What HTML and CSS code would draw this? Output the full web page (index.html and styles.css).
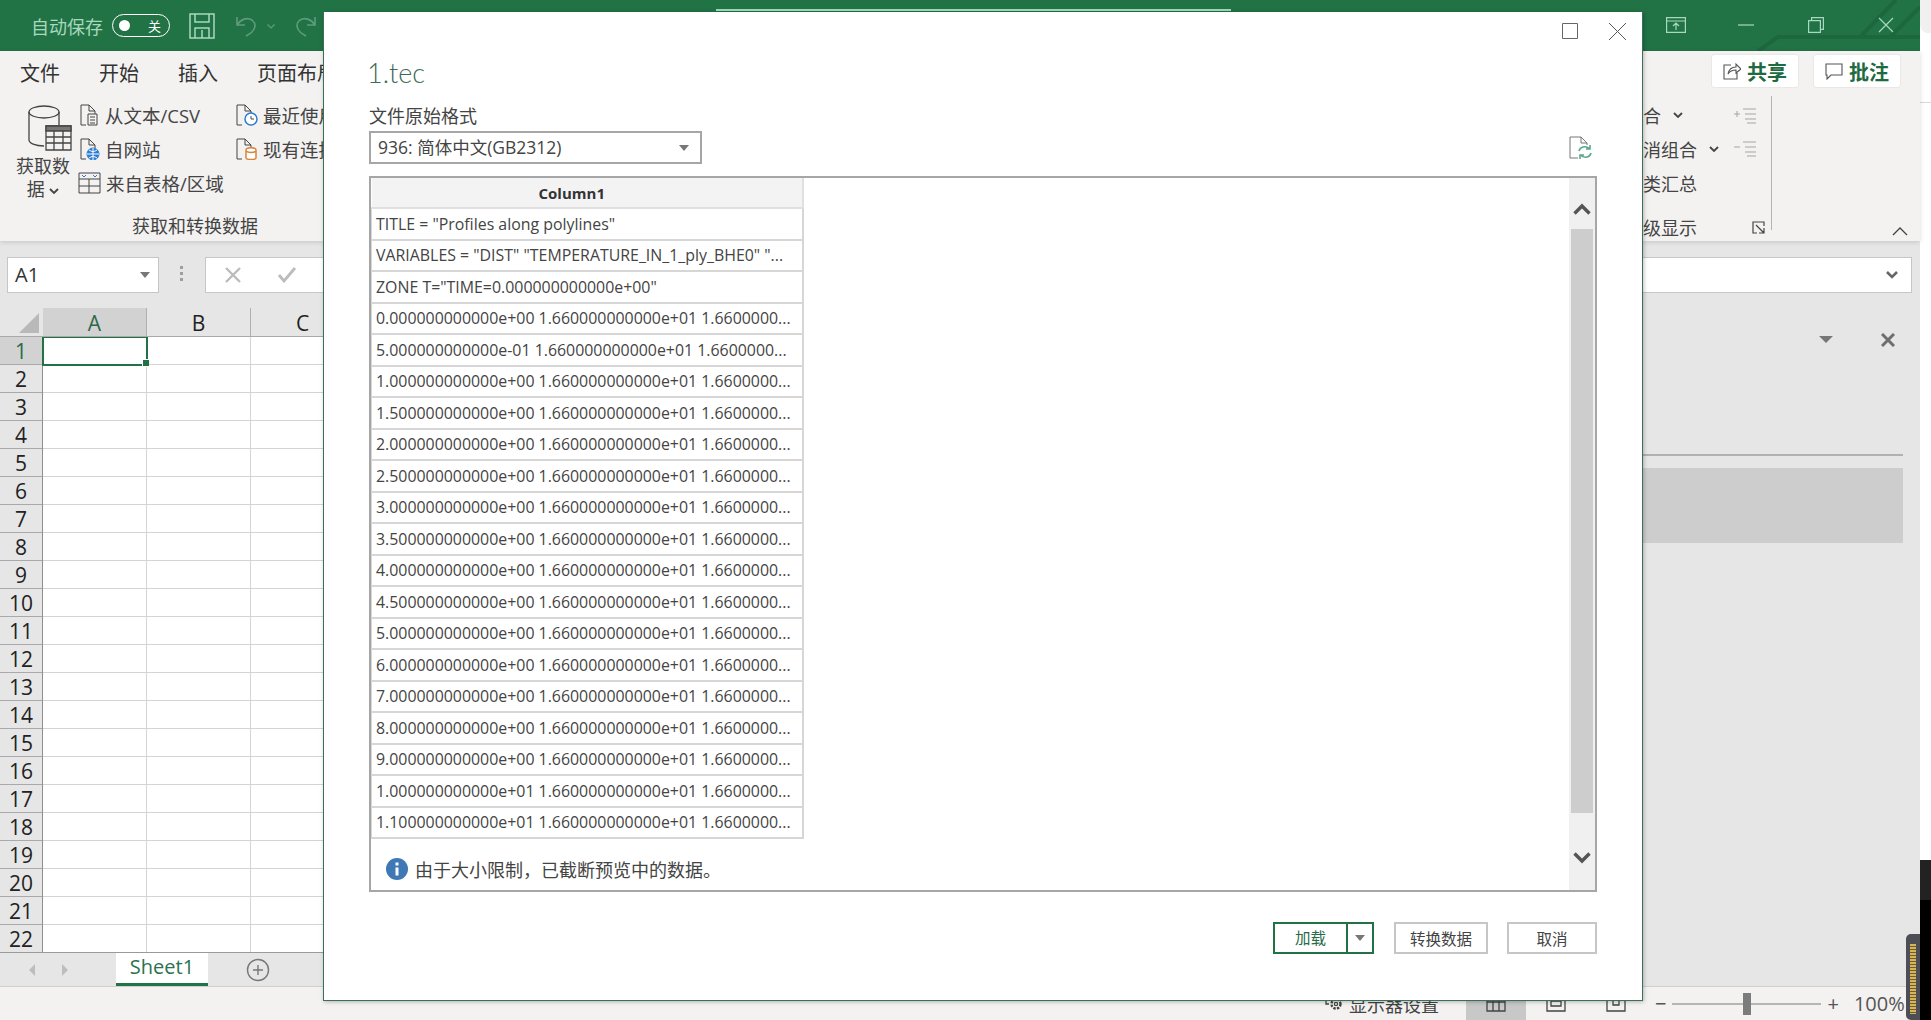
FILE: index.html
```html
<!DOCTYPE html>
<html lang="zh-CN">
<head>
    <meta charset="UTF-8">
    <title>1.tec - Excel</title>
    <link rel="stylesheet" href="styles.css">
</head>
<body>
    <div class="app">
        <div class="excel">
            <!-- title bar -->
            <div class="titlebar">
                <span class="autosave">自动保存</span>
                <span class="toggle"><i></i><b>关</b></span>
                <svg class="qa-save" width="26" height="26" viewBox="0 0 26 26" fill="none" stroke="#a8d8bd" stroke-width="1.5"><path d="M1 1h24v24H1zM6 1v8h14V1M6 25V15h14v10M13 17v8"/></svg>
                <svg class="qa-undo" width="24" height="24" viewBox="0 0 24 24" fill="none" stroke="#5f9c7c" stroke-width="1.6"><path d="M2 3v8h8M2 11c4-6 10-8 15-5 5 4 4 11-6 16"/></svg>
                <svg class="qa-caret" width="8" height="5" viewBox="0 0 8 5" fill="none" stroke="#5f9c7c" stroke-width="1.2"><path d="M.5.5L4 4 7.5.5"/></svg>
                <svg class="qa-redo" width="24" height="24" viewBox="0 0 24 24" fill="none" stroke="#5f9c7c" stroke-width="1.6"><path d="M22 3v8h-8M22 11c-4-6-10-8-15-5-5 4-4 11 6 16"/></svg>
                <div class="title-progress"></div>
                <svg class="title-deco" width="300" height="51" viewBox="0 0 300 51" fill="none" stroke="#1d673e" stroke-width="4"><path d="M138 51l20-14h142M240 37l36-37M270 37l30-30"/></svg>
                <div class="win-btns">
                    <svg class="win-ribbon" width="20" height="16" viewBox="0 0 20 16" fill="none" stroke="#a8d8bd" stroke-width="1.2"><path d="M.6.6h18.8v14.8H.6zM.6 4h18.8M10 13V6M7 9l3-3 3 3"/></svg>
                    <svg width="16" height="16" viewBox="0 0 16 16" stroke="#a8d8bd" stroke-width="1.2"><path d="M0 8h16"/></svg>
                    <svg width="16" height="16" viewBox="0 0 16 16" fill="none" stroke="#a8d8bd" stroke-width="1.2"><path d="M.6 3.6h11.8v11.8H.6zM3.6 3.6V.6h11.8v11.8h-3"/></svg>
                    <svg width="16" height="16" viewBox="0 0 16 16" stroke="#a8d8bd" stroke-width="1.2"><path d="M1 1l14 14M15 1L1 15"/></svg>
                </div>
            </div>

            <!-- ribbon -->
            <div class="ribbon">
                <div class="tabs">
                    <span>文件</span><span>开始</span><span>插入</span><span>页面布局</span>
                    <div class="tab-actions">
                        <button class="pill">
                            <svg width="18" height="18" viewBox="0 0 18 18" fill="none" stroke="#555" stroke-width="1.1"><path d="M8 3H1v14h13v-6M5 12c1-5 4-7 8-7V2l5 5-5 4V8c-4 0-6 1-8 4z"/></svg>共享
                        </button>
                        <button class="pill">
                            <svg width="18" height="18" viewBox="0 0 18 18" fill="none" stroke="#555" stroke-width="1.1"><path d="M1 2h16v11H6l-4 4v-4H1z"/></svg>批注
                        </button>
                    </div>
                </div>
                <div class="groups">
                    <div class="get-data">
                        <div class="get-data-top">
                            <div class="get-big">
                                <svg width="44" height="46" viewBox="0 0 44 46" fill="none" stroke="#444" stroke-width="1.3"><ellipse cx="16" cy="7" rx="15" ry="6"/><path d="M1 7v28c0 3 6 6 15 6M31 7v13"/><path d="M18 21h25v24H18z" fill="#f3f2f1"/><path d="M18 21h25v5H18z" fill="#777"/><path d="M18 32h25M18 38h25M26 26v19M35 26v19"/></svg>
                                <span>获取数<br>据 <svg class="chev" width="10" height="6" viewBox="0 0 10 6" fill="none" stroke="#444" stroke-width="1.8"><path d="M1 1l4 4 4-4"/></svg></span>
                            </div>
                            <div class="get-list">
                                <div class="cmd"><svg width="20" height="22" viewBox="0 0 20 22" fill="none" stroke="#444"><path d="M6 21H1V1h8l6 6v3M9 1v6h6"/><path d="M8 10h9v11H8zM10 13h5M10 16h5M10 19h5"/></svg>从文本/CSV</div>
                                <div class="cmd"><svg width="20" height="22" viewBox="0 0 20 22" fill="none" stroke="#444"><path d="M6 21H1V1h8l6 6v3M9 1v6h6"/><circle cx="13" cy="16" r="6" fill="#2b7cd3" stroke="#2b7cd3"/><path d="M7 16h12M13 10v12M9 12c3 2 5 2 8 0M9 20c3-2 5-2 8 0" stroke="#fff"/></svg>自网站</div>
                                <div class="cmd wide"><svg width="23" height="22" viewBox="0 0 23 22" fill="none" stroke="#444"><path d="M1 1h21v20H1zM1 7h21M1 14h21M11 7v14"/><path d="M4 3l2 2 2-2M15 3l2 2 2-2" stroke="#2b7cd3"/></svg>来自表格/区域</div>
                            </div>
                            <div class="get-list recent">
                                <div class="cmd"><svg width="22" height="22" viewBox="0 0 22 22" fill="none" stroke="#444"><path d="M6 21H1V1h8l6 6v3M9 1v6h6"/><circle cx="15" cy="15" r="6" fill="#fff" stroke="#2b7cd3" stroke-width="1.5"/><path d="M15 12v3h3"/></svg>最近使用的源</div>
                                <div class="cmd"><svg width="22" height="22" viewBox="0 0 22 22" fill="none" stroke="#444"><path d="M6 21H1V1h8l6 6v3M9 1v6h6"/><path d="M10 12c0-3 10-3 10 0v8c0 2-10 2-10 0zM10 13c2 2 8 2 10 0" fill="#fff" stroke="#d9853b" stroke-width="1.5"/></svg>现有连接</div>
                            </div>
                        </div>
                        <div class="group-label">获取和转换数据</div>
                    </div>
                    <div class="outline">
                        <div class="outline-top">
                            <div class="outline-list">
                                <div class="o-row">组合<svg width="10" height="6" viewBox="0 0 10 6" fill="none" stroke="#444" stroke-width="1.8"><path d="M1 1l4 4 4-4"/></svg></div>
                                <div class="o-row">取消组合<svg width="10" height="6" viewBox="0 0 10 6" fill="none" stroke="#444" stroke-width="1.8"><path d="M1 1l4 4 4-4"/></svg></div>
                                <div class="o-row">分类汇总</div>
                            </div>
                            <div class="outline-icons">
                                <svg width="22" height="16" viewBox="0 0 22 16" fill="none" stroke="#a5a5a5"><path d="M0 6h6M3 3v6M9 1h13M11 6h11M11 11h11M13 15h9"/></svg>
                                <svg width="22" height="16" viewBox="0 0 22 16" fill="none" stroke="#a5a5a5"><path d="M0 6h6M9 1h13M11 6h11M11 11h11M13 15h9"/></svg>
                            </div>
                        </div>
                        <div class="outline-foot">
                            <span>分级显示</span>
                            <svg width="13" height="13" viewBox="0 0 13 13" fill="none" stroke="#444" stroke-width="1.2"><path d="M12 5V1H1v11h4M4 4l8 8M12 7v5H7"/></svg>
                        </div>
                    </div>
                    <div class="ribbon-end">
                        <svg width="16" height="9" viewBox="0 0 16 9" fill="none" stroke="#444" stroke-width="1.3"><path d="M1 8l7-7 7 7"/></svg>
                    </div>
                </div>
            </div>

            <!-- formula bar -->
            <div class="formula">
                <div class="namebox">A1<i class="caret"></i></div>
                <div class="grip"></div>
                <div class="fx-input">
                    <svg width="18" height="16" viewBox="0 0 18 16" stroke="#bcbcbc" stroke-width="2.4"><path d="M2 1l14 14M16 1L2 15"/></svg>
                    <svg width="20" height="16" viewBox="0 0 20 16" fill="none" stroke="#bcbcbc" stroke-width="2.8"><path d="M2 8l5 6L18 1"/></svg>
                    <svg class="fx-chevron" width="12" height="8" viewBox="0 0 12 8" fill="none" stroke="#666" stroke-width="2.6"><path d="M1 1l5 5 5-5"/></svg>
                </div>
            </div>

            <!-- sheet + side pane -->
            <div class="main">
                <div class="sheet">
                    <div class="col-heads">
                        <div class="corner"><i></i></div>
                        <div class="col-head active">A</div>
                        <div class="col-head">B</div>
                        <div class="col-head">C</div>
                    </div>
                    <div class="grid-body">
                        <div class="row-heads">
                            <div class="active">1</div><div>2</div><div>3</div><div>4</div><div>5</div><div>6</div>
                            <div>7</div><div>8</div><div>9</div><div>10</div><div>11</div><div>12</div>
                            <div>13</div><div>14</div><div>15</div><div>16</div><div>17</div><div>18</div>
                            <div>19</div><div>20</div><div>21</div><div>22</div>
                        </div>
                        <div class="cells">
                            <div class="cell-selected"><i></i></div>
                        </div>
                    </div>
                    <div class="sheet-tabs">
                        <span class="nav-arrow left"></span>
                        <span class="nav-arrow right"></span>
                        <div class="sheet-tab">Sheet1</div>
                        <svg class="add-sheet" width="24" height="24" viewBox="0 0 24 24" fill="none" stroke="#777" stroke-width="1.4"><circle cx="12" cy="12" r="10.5"/><path d="M12 7v10M7 12h10"/></svg>
                    </div>
                </div>
                <div class="pane">
                    <div class="pane-head">
                        <i class="pane-caret"></i>
                        <svg width="14" height="14" viewBox="0 0 14 14" stroke="#6e6e6e" stroke-width="3"><path d="M1 1l12 12M13 1L1 13"/></svg>
                    </div>
                    <div class="pane-line"></div>
                    <div class="pane-item"></div>
                </div>
            </div>

            <!-- status bar -->
            <div class="statusbar">
                <span class="status-display">
                    <svg width="18" height="20" viewBox="0 0 18 20" fill="none" stroke="#444" stroke-width="1.3"><path d="M1 0v12h3"/><circle cx="11" cy="12" r="4.5" stroke-width="2.4" stroke-dasharray="2.4 1.2"/><circle cx="11" cy="12" r="1.6"/></svg>显示器设置
                </span>
                <div class="view-btn on"><svg width="20" height="16" viewBox="0 0 20 16" fill="none" stroke="#444" stroke-width="1.3"><path d="M1 1h18v14H1zM1 6h18M7 1v14M13 1v14"/></svg></div>
                <div class="view-btn"><svg width="20" height="16" viewBox="0 0 20 16" fill="none" stroke="#444" stroke-width="1.3"><path d="M1 1h18v14H1zM5 1v9h10V1M5 5h10"/></svg></div>
                <div class="view-btn"><svg width="20" height="16" viewBox="0 0 20 16" fill="none" stroke="#444" stroke-width="1.3"><path d="M1 1h18v14H1zM7 1v8h6V1"/></svg></div>
                <span class="zoom-sign minus">−</span>
                <div class="zoom-track"><i></i></div>
                <span class="zoom-sign">+</span>
                <span class="zoom-val">100%</span>
            </div>
        </div>
        <div class="edge">
            <div class="edge-corner"></div>
            <div class="edge-line"></div>
            <div class="edge-black"></div>
        </div>
    </div>

    <!-- meter widget that floats over the window corner -->
    <div class="meter"><i></i></div>

    <!-- import dialog -->
    <div class="dialog">
        <div class="dlg-controls">
            <svg width="16" height="16" viewBox="0 0 16 16" fill="none" stroke="#666"><path d="M.5.5h15v15H.5z"/></svg>
            <svg class="dlg-close" width="19" height="19" viewBox="0 0 19 19" stroke="#555"><path d="M1 1l17 17M18 1L1 18"/></svg>
        </div>
        <div class="dlg-title">1.tec</div>
        <div class="dlg-label">文件原始格式</div>
        <div class="dlg-encoding">
            <div class="dlg-select">936: 简体中文(GB2312)<i class="caret"></i></div>
            <svg width="24" height="24" viewBox="0 0 24 24" fill="none"><path d="M9 22H1V1h11l6 6v2M12 1v6h6" stroke="#777"/><path d="M10 15c1-4 6-6 11-2M22 17c-1 4-6 6-11 2M21 9v4h-4M11 23v-4h4" stroke="#5aa88a" stroke-width="1.6"/></svg>
        </div>
        <div class="preview">
            <div class="preview-main">
                <table class="data">
                    <tr><th>Column1</th></tr>
                    <tr><td>TITLE = "Profiles along polylines"</td></tr>
                    <tr><td>VARIABLES = "DIST" "TEMPERATURE_IN_1_ply_BHE0" "...</td></tr>
                    <tr><td>ZONE T="TIME=0.000000000000e+00"</td></tr>
                    <tr><td>0.000000000000e+00 1.660000000000e+01 1.6600000...</td></tr>
                    <tr><td>5.000000000000e-01 1.660000000000e+01 1.6600000...</td></tr>
                    <tr><td>1.000000000000e+00 1.660000000000e+01 1.6600000...</td></tr>
                    <tr><td>1.500000000000e+00 1.660000000000e+01 1.6600000...</td></tr>
                    <tr><td>2.000000000000e+00 1.660000000000e+01 1.6600000...</td></tr>
                    <tr><td>2.500000000000e+00 1.660000000000e+01 1.6600000...</td></tr>
                    <tr><td>3.000000000000e+00 1.660000000000e+01 1.6600000...</td></tr>
                    <tr><td>3.500000000000e+00 1.660000000000e+01 1.6600000...</td></tr>
                    <tr><td>4.000000000000e+00 1.660000000000e+01 1.6600000...</td></tr>
                    <tr><td>4.500000000000e+00 1.660000000000e+01 1.6600000...</td></tr>
                    <tr><td>5.000000000000e+00 1.660000000000e+01 1.6600000...</td></tr>
                    <tr><td>6.000000000000e+00 1.660000000000e+01 1.6600000...</td></tr>
                    <tr><td>7.000000000000e+00 1.660000000000e+01 1.6600000...</td></tr>
                    <tr><td>8.000000000000e+00 1.660000000000e+01 1.6600000...</td></tr>
                    <tr><td>9.000000000000e+00 1.660000000000e+01 1.6600000...</td></tr>
                    <tr><td>1.000000000000e+01 1.660000000000e+01 1.6600000...</td></tr>
                    <tr><td>1.100000000000e+01 1.660000000000e+01 1.6600000...</td></tr>
                </table>
                <div class="note">
                    <svg width="22" height="22" viewBox="0 0 22 22"><circle cx="11" cy="11" r="11" fill="#3f79b5"/><path d="M9.5 9.5h3v8h-3zM9.5 4.5h3v3h-3z" fill="#fff"/></svg>
                    由于大小限制，已截断预览中的数据。
                </div>
            </div>
            <div class="scrollbar">
                <svg width="18" height="12" viewBox="0 0 18 12" fill="none" stroke="#555" stroke-width="3.4"><path d="M1.5 10.5L9 3l7.5 7.5"/></svg>
                <div class="thumb"></div>
                <svg width="18" height="12" viewBox="0 0 18 12" fill="none" stroke="#555" stroke-width="3.4"><path d="M1.5 1.5L9 9l7.5-7.5"/></svg>
            </div>
        </div>
        <div class="dlg-buttons">
            <div class="split">
                <span>加载</span>
                <span class="split-arrow"><i class="caret"></i></span>
            </div>
            <button class="dlg-btn transform">转换数据</button>
            <button class="dlg-btn cancel">取消</button>
        </div>
    </div>
</body>
</html>
```

FILE: styles.css
```css
body, html {
    margin: 0;
    padding: 0;
    height: 100%;
    overflow: hidden;
    font-family: "Open Sans", "Noto Sans CJK SC", sans-serif;
    color: #444;
    background: #fff;
}

svg {
    display: block;
    flex: none;
}

.app {
    display: flex;
    height: 1020px;
}

.excel {
    width: 1920px;
    display: flex;
    flex-direction: column;
    background: #e6e6e6;
}

/* title bar */
.titlebar {
    height: 51px;
    flex: none;
    background: #217346;
    display: flex;
    align-items: center;
    padding-left: 31px;
    position: relative;
    overflow: hidden;
}

.autosave {
    font-size: 18px;
    color: #a8d8bd;
    margin-right: 9px;
}

.toggle {
    width: 58px;
    height: 23px;
    border: 1.5px solid #fff;
    border-radius: 12px;
    display: flex;
    align-items: center;
    justify-content: space-between;
    padding: 0 8px 0 6px;
    box-sizing: border-box;
    margin-right: 19px;
}

.toggle i {
    width: 11px;
    height: 11px;
    background: #fff;
    border-radius: 50%;
}

.toggle b {
    font-weight: 400;
    font-size: 13px;
    color: #fff;
}

.qa-undo {
    margin-left: 20px;
}

.qa-caret {
    margin: 2px 18px 0 8px;
}

.title-progress {
    position: absolute;
    left: 716px;
    top: 9px;
    width: 515px;
    height: 2px;
    background: #9fd8b8;
}

.title-deco {
    position: absolute;
    right: 0;
    top: 0;
}

.win-btns {
    position: absolute;
    right: 26px;
    top: 17px;
    display: flex;
    align-items: center;
    gap: 54px;
}

.win-ribbon {
    margin-right: -2px;
}

/* ribbon */
.ribbon {
    height: 190px;
    flex: none;
    background: #f3f2f1;
    display: flex;
    flex-direction: column;
    box-shadow: 0 1px 5px rgba(0, 0, 0, 0.15);
    position: relative;
}

.tabs {
    height: 44px;
    display: flex;
    align-items: center;
    padding: 2px 0 0 20px;
    box-sizing: border-box;
    gap: 39px;
    font-size: 20px;
    color: #333;
}

.tab-actions {
    margin: -2px 19px 0 auto;
    display: flex;
    gap: 14px;
}

.pill {
    width: 88px;
    height: 34px;
    background: #fff;
    border: 1px solid #e9e8e7;
    border-radius: 3px;
    display: flex;
    align-items: center;
    justify-content: center;
    gap: 6px;
    font-family: inherit;
    font-size: 20px;
    font-weight: 700;
    color: #1e6b41;
    padding: 0;
}

.groups {
    flex: 1;
    display: flex;
    justify-content: space-between;
}

.get-data {
    width: 320px;
    display: flex;
    flex-direction: column;
}

.get-data-top {
    height: 121px;
    display: flex;
    padding: 12px 0 0 16px;
    box-sizing: border-box;
}

.get-big {
    width: 62px;
    flex: none;
    display: flex;
    flex-direction: column;
    align-items: center;
    font-size: 18px;
    line-height: 23px;
    text-align: center;
    padding: 2px 8px 0 0;
    box-sizing: border-box;
}

.get-big > svg {
    margin-left: 14px;
    margin-bottom: 4px;
}

.get-big span {
    white-space: nowrap;
}

.chev {
    display: inline-block;
    vertical-align: 2px;
}

.get-list {
    width: 156px;
    flex: none;
    margin: -5px 0 0 2px;
}

.get-list.recent {
    width: 160px;
    margin-left: 0;
}

.cmd {
    height: 34px;
    display: flex;
    align-items: center;
    gap: 5px;
    font-size: 18.5px;
    white-space: nowrap;
}

.cmd.wide {
    margin-left: -2px;
}

.group-label {
    text-align: center;
    font-size: 18px;
    line-height: 30px;
    margin-top: -1px;
    padding-left: 70px;
    white-space: nowrap;
}

.outline {
    margin-left: auto;
    width: 147px;
    height: 134px;
    margin-top: 5px;
    box-sizing: border-box;
    border-right: 1px solid #b5b5b5;
    display: flex;
    flex-direction: column;
    align-self: flex-start;
    padding: 2px 6px 0 0;
}

.outline-top {
    flex: 1;
    display: flex;
    justify-content: space-between;
}

.outline-list {
    font-size: 18px;
}

.o-row {
    height: 34px;
    display: flex;
    align-items: center;
    white-space: nowrap;
    gap: 12px;
}

.outline-icons {
    display: flex;
    flex-direction: column;
    gap: 17px;
    padding: 10px 9px 0 0;
}

.outline-foot {
    height: 32px;
    margin-bottom: -13px;
    display: flex;
    align-items: center;
    justify-content: space-between;
    font-size: 18px;
    white-space: nowrap;
}

.ribbon-end {
    width: 148px;
    display: flex;
    align-items: flex-end;
    justify-content: flex-end;
    padding: 0 12px 5px 0;
    box-sizing: border-box;
}

/* formula bar */
.formula {
    height: 67px;
    flex: none;
    display: flex;
    padding: 16px 8px 15px 7px;
    box-sizing: border-box;
}

.namebox {
    width: 152px;
    background: #fff;
    border: 1px solid #c6c6c6;
    box-sizing: border-box;
    font-size: 20px;
    line-height: 34px;
    padding: 0 8px 0 7px;
    color: #333;
    display: flex;
    align-items: center;
    justify-content: space-between;
}

.caret {
    display: block;
    width: 0;
    height: 0;
    border: 5px solid transparent;
    border-top: 6px solid #777;
    border-bottom: 0;
}

.grip {
    width: 3px;
    height: 15px;
    margin: 9px 22px 0 21px;
    background: repeating-linear-gradient(#9e9e9e 0 3px, transparent 3px 6px);
}

.fx-input {
    flex: 1;
    background: #fff;
    border: 1px solid #c6c6c6;
    display: flex;
    align-items: center;
    padding: 0 13px 0 18px;
    gap: 35px;
}

.fx-chevron {
    margin-left: auto;
}

/* sheet */
.main {
    flex: 1;
    display: flex;
    min-height: 0;
}

.sheet {
    width: 1400px;
    display: flex;
    flex-direction: column;
    flex: none;
}

.col-heads {
    height: 28px;
    display: flex;
    border-bottom: 1px solid #a9a9a9;
}

.corner {
    width: 43px;
    flex: none;
    display: flex;
    align-items: flex-end;
    justify-content: flex-end;
    padding: 0 4px 3px 0;
    box-sizing: border-box;
}

.corner i {
    width: 0;
    height: 0;
    border-left: 20px solid transparent;
    border-bottom: 20px solid #b9b9b9;
}

.col-head {
    width: 104px;
    border-right: 1px solid #b0b0b0;
    box-sizing: border-box;
    text-align: center;
    font-size: 21px;
    line-height: 26px;
    padding-top: 2px;
    color: #222;
}

.col-head.active {
    background: #d2d2d2;
    color: #2a6a48;
}

.grid-body {
    height: 616px;
    display: flex;
    background: #fff;
    overflow: hidden;
}

.row-heads {
    width: 43px;
    flex: none;
    background: #e6e6e6;
    border-right: 1px solid #8f8f8f;
    box-sizing: border-box;
}

.row-heads div {
    height: 28px;
    box-sizing: border-box;
    border-bottom: 1px solid #a9a9a9;
    text-align: center;
    font-size: 21px;
    line-height: 25px;
    padding-top: 2px;
    color: #222;
}

.row-heads .active {
    background: #d2d2d2;
    color: #2a6a48;
}

.cells {
    flex: 1;
    position: relative;
    background-image:
        linear-gradient(#d4d4d4 1px, transparent 1px),
        linear-gradient(90deg, #d4d4d4 1px, transparent 1px);
    background-size: 104px 28px;
    background-position: 0 -1px, 103px 0;
}

.cell-selected {
    position: absolute;
    left: -1px;
    top: -1px;
    width: 106px;
    height: 30px;
    box-sizing: border-box;
    border: 2px solid #217346;
}

.cell-selected i {
    position: absolute;
    right: -3px;
    bottom: -3px;
    width: 6px;
    height: 6px;
    background: #217346;
    border: 1px solid #fff;
    border-right: 0;
}

.sheet-tabs {
    flex: 1;
    display: flex;
    border-top: 1px solid #9a9a9a;
    border-bottom: 1px solid #cfcfcf;
    align-items: flex-start;
    box-sizing: border-box;
    padding-left: 29px;
}

.nav-arrow {
    width: 0;
    height: 0;
    margin-top: 11px;
    border: 5px solid transparent;
    border-top-width: 6px;
    border-bottom-width: 6px;
}

.nav-arrow.left {
    border-left: 0;
    border-right: 6px solid #bdbdbd;
}

.nav-arrow.right {
    margin-left: 27px;
    border-right: 0;
    border-left: 6px solid #bdbdbd;
}

.sheet-tab {
    width: 92px;
    height: 30px;
    margin: 0 0 0 48px;
    background: #fff;
    border-bottom: 3px solid #217346;
    box-sizing: content-box;
    text-align: center;
    font-size: 20px;
    line-height: 28px;
    color: #2a7350;
}

.add-sheet {
    margin: 5px 0 0 38px;
}

/* side pane */
.pane {
    flex: 1;
    display: flex;
    flex-direction: column;
    padding-right: 17px;
    border-bottom: 1px solid #cfcfcf;
}

.pane-head {
    height: 60px;
    display: flex;
    align-items: center;
    justify-content: flex-end;
    padding-top: 3px;
    padding-right: 8px;
    gap: 48px;
    box-sizing: border-box;
}

.pane-caret {
    width: 0;
    height: 0;
    border: 7px solid transparent;
    border-top: 7px solid #777;
    border-bottom: 0;
}

.pane-line {
    height: 2px;
    background: #b1b1b1;
    margin-top: 86px;
}

.pane-item {
    height: 75px;
    background: #cdcdcd;
    margin-top: 12px;
}

/* status bar */
.statusbar {
    height: 33px;
    flex: none;
    background: #f3f2f1;
    display: flex;
    align-items: flex-start;
    padding-left: 1325px;
    overflow: hidden;
    font-size: 18px;
    position: relative;
}

.status-display {
    width: 141px;
    padding-top: 5px;
    line-height: 26px;
    display: flex;
    gap: 6px;
}

.view-btn {
    width: 60px;
    height: 33px;
    display: flex;
    align-items: center;
    justify-content: center;
}

.view-btn.on {
    background: #c8c8c8;
}

.zoom-sign {
    font-size: 20px;
    line-height: 33px;
    color: #555;
}

.zoom-sign.minus {
    margin-left: 9px;
}

.zoom-track {
    width: 149px;
    height: 2px;
    margin: 16px 6px 0 6px;
    background: #b5b5b5;
    position: relative;
}

.zoom-track i {
    position: absolute;
    left: 71px;
    top: -10px;
    width: 8px;
    height: 22px;
    background: #7c7c7c;
}

.zoom-val {
    margin-left: 15px;
    font-size: 20px;
    line-height: 33px;
    color: #555;
    white-space: nowrap;
}

/* strip right of the window */
.edge {
    flex: 1;
    display: flex;
    flex-direction: column;
}

.edge-corner {
    height: 33px;
    background: #f0f0f0;
    border-bottom-left-radius: 8px;
}

.edge-line {
    height: 1px;
    margin-top: 69px;
    background: #d9d9d9;
}

.edge-black {
    margin-top: 757px;
    flex: 1;
    background: linear-gradient(#222 0 40px, #000 40px);
}

.meter {
    position: absolute;
    left: 1906px;
    top: 934px;
    width: 14px;
    height: 86px;
    background: #4d4d55;
    border-radius: 5px 0 0 5px;
    display: flex;
    justify-content: center;
    padding-top: 10px;
    box-sizing: border-box;
}

.meter i {
    width: 6px;
    height: 70px;
    background: repeating-linear-gradient(#d6b45a 0 2px, #6d5c34 2px 3px);
}

/* dialog */
.dialog {
    position: absolute;
    left: 323px;
    top: 12px;
    width: 1320px;
    height: 989px;
    box-sizing: border-box;
    background: #fff;
    border: solid #3a6f58;
    border-width: 0 1px 1px 1px;
    box-shadow: 1px 1px 4px rgba(0, 0, 0, 0.25);
    padding: 0 45px 0 45px;
    display: flex;
    flex-direction: column;
}

.dlg-controls {
    height: 0;
    display: flex;
    justify-content: flex-end;
    align-items: flex-start;
    gap: 30px;
    margin-right: -30px;
    padding-top: 11px;
}

.dlg-close {
    margin-top: -1px;
}

.dlg-title {
    margin: 31px 0 0 -2px;
    font-family: "Lato", sans-serif;
    font-size: 27px;
    font-weight: 300;
    line-height: 38px;
    color: #3d6b57;
}

.dlg-label {
    margin-top: 12px;
    font-size: 18px;
    line-height: 24px;
    color: #444;
}

.dlg-encoding {
    display: flex;
    align-items: flex-start;
    justify-content: space-between;
    margin-top: 3px;
    height: 45px;
    padding-right: 4px;
}

.dlg-encoding svg {
    margin-top: 5px;
}

.dlg-select {
    width: 333px;
    height: 33px;
    box-sizing: border-box;
    border: 2px solid #a6a6a6;
    font-size: 17.5px;
    line-height: 29px;
    padding: 0 11px 0 7px;
    display: flex;
    align-items: center;
    justify-content: space-between;
    color: #444;
}

.preview {
    height: 716px;
    box-sizing: border-box;
    border: 2px solid #a6a6a6;
    display: flex;
}

.preview-main {
    flex: 1;
    display: flex;
    flex-direction: column;
}

.data {
    width: 433px;
    border-collapse: collapse;
    table-layout: fixed;
    font-size: 15.9px;
    color: #444;
}

.data th {
    height: 29px;
    padding: 0 30px 0 0;
    background: #f3f3f3;
    font-weight: 700;
    font-size: 15px;
    border: 2px solid #e0e0e0;
    border-top: 0;
    border-left: 0;
    color: #333;
}

.data td {
    height: 31.5px;
    padding: 0 0 0 4px;
    box-sizing: border-box;
    border: 2px solid #d6d6d6;
    border-left: 1px solid #d6d6d6;
    white-space: nowrap;
    overflow: hidden;
}

.note {
    display: flex;
    align-items: center;
    gap: 7px;
    font-size: 18px;
    padding: 17px 0 0 15px;
}

.scrollbar {
    width: 26px;
    background: #f0f0f0;
    display: flex;
    flex-direction: column;
    align-items: center;
    padding-top: 25px;
    box-sizing: border-box;
}

.thumb {
    width: 22px;
    height: 584px;
    background: #cdcdcd;
    margin: 14px 0 39px;
}

.dlg-buttons {
    display: flex;
    justify-content: flex-end;
    margin-top: 30px;
    gap: 20px;
}

.split {
    width: 101px;
    height: 32px;
    box-sizing: border-box;
    border: 2px solid #217346;
    display: flex;
    font-size: 15.5px;
    line-height: 28px;
    color: #2a6a48;
    text-align: center;
}

.split span:first-child {
    flex: 1;
}

.split-arrow {
    width: 24px;
    border-left: 2px solid #217346;
    display: flex;
    align-items: center;
    justify-content: center;
}

.dlg-btn {
    height: 32px;
    box-sizing: border-box;
    border: 2px solid #c6c6c6;
    background: #fff;
    font-family: inherit;
    font-size: 15.5px;
    color: #444;
    padding: 0;
}

.dlg-btn.transform {
    width: 94px;
}

.dlg-btn.cancel {
    width: 90px;
    margin-left: -1px;
}
```
